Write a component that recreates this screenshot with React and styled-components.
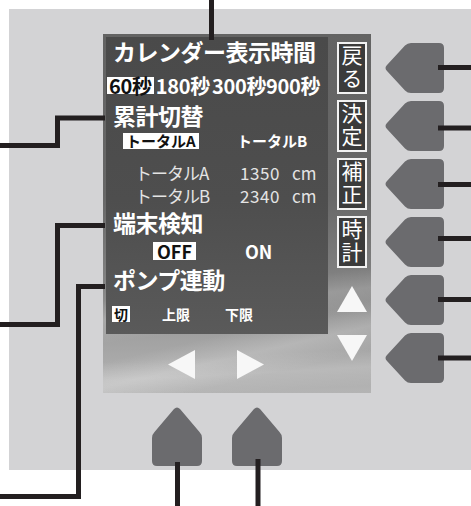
import styled, { createGlobalStyle } from "styled-components";

const JP = `"Noto Sans CJK JP", "Noto Sans", sans-serif`;

const GlobalStyle = createGlobalStyle`
  html, body {
    margin: 0;
    padding: 0;
    background: #fff;
  }
  body {
    font-family: ${JP};
  }
`;

const Figure = styled.div`
  position: relative;
  width: 471px;
  height: 506px;
  padding-top: 9px;
  box-sizing: border-box;
  overflow: hidden;
  background: #fff;
`;

const Panel = styled.div`
  margin-left: 9px;
  height: 461px;
  box-sizing: border-box;
  padding: 25px 0 0 94px;
  background: #d3d3d5;
  display: flex;
  flex-direction: column;
`;

const TopRow = styled.div`
  display: flex;
  align-items: flex-start;
  gap: 13px;
`;

const Screen = styled.div`
  width: 268px;
  height: 359px;
  box-sizing: border-box;
  padding: 3px 0 0 3px;
  display: grid;
  grid-template-columns: 222px 1fr;
  grid-template-rows: 297px 1fr;
  background:
    linear-gradient(173deg, transparent 68%, rgba(255, 255, 255, 0.16) 73%, transparent 79%),
    linear-gradient(167deg, transparent 78%, rgba(255, 255, 255, 0.2) 84%, transparent 90%),
    linear-gradient(177deg, transparent 88%, rgba(255, 255, 255, 0.16) 93%, transparent 98%),
    linear-gradient(to bottom, #636363 0%, #676767 45%, #838383 70%, #a2a2a2 85%, #b4b4b4 100%);
`;

const Content = styled.div`
  background: linear-gradient(to bottom, #4a4a4a 0%, #4e4e4e 55%, #5a5a5a 100%);
  color: #fff;
  display: flex;
  flex-direction: column;
`;

const Heading = styled.div`
  margin: ${(p) => p.$top}px 0 0 7px;
  height: 23px;
  font-size: 23px;
  line-height: 23px;
  font-weight: 700;
  letter-spacing: -0.5px;
  white-space: nowrap;
`;

const Row = styled.div`
  margin: ${(p) => p.$top}px 0 0 ${(p) => p.$indent}px;
  height: ${(p) => p.$h}px;
  display: ${(p) => (p.$cols ? "grid" : "flex")};
  grid-template-columns: ${(p) => p.$cols || "none"};
  align-items: center;
  font-size: ${(p) => p.$size}px;
  line-height: ${(p) => p.$h}px;
  font-weight: 700;
  letter-spacing: ${(p) => p.$track ?? 0}px;
  white-space: nowrap;
`;

const Chip = styled.span`
  justify-self: start;
  height: 100%;
  padding: 0 ${(p) => p.$pad ?? 2}px;
  background: ${(p) => (p.$on ? "#fff" : "transparent")};
  color: ${(p) => (p.$on ? "#111" : "#fff")};
`;

const Values = styled.div`
  margin: 15px 0 0 29px;
  display: grid;
  grid-template-columns: 105px 52px auto;
  row-gap: 6px;
  font-size: 17px;
  line-height: 17px;
  font-weight: 400;
  color: #e4e4e4;
  white-space: nowrap;

  .num {
    letter-spacing: 0.6px;
  }
  .label {
    letter-spacing: -1px;
  }
`;

const Side = styled.div`
  grid-row: 1 / 3;
  grid-column: 2;
  padding: 5px 0 0 9px;
  display: flex;
  flex-direction: column;
  align-items: flex-start;
  gap: 6px;
`;

const SideKey = styled.div`
  width: 30px;
  height: 52px;
  box-sizing: border-box;
  border: 2px solid #f2f2f2;
  background: #3b3b3b;
  color: #fff;
  display: flex;
  align-items: center;
  justify-content: center;
  writing-mode: vertical-rl;
  text-orientation: upright;
  font-size: 21px;
  line-height: 26px;
  letter-spacing: 2px;
  font-weight: 400;
`;

const Tri = styled.svg`
  display: block;
  margin-top: ${(p) => p.$top}px;
`;

const ArrowRow = styled.div`
  padding: 16px 0 0 62px;
  display: flex;
  gap: 42px;
`;

const KeyColumn = styled.div`
  padding-top: 9px;
  display: flex;
  flex-direction: column;
  gap: 8px;
`;

const BottomKeys = styled.div`
  margin: 13px 0 0 49px;
  display: flex;
  gap: 30px;
`;

const Leaders = styled.svg`
  position: absolute;
  left: 0;
  top: 0;
  pointer-events: none;
`;

const KEY = "#6b6b6e";

const LeftKey = () => (
  <svg width="60" height="50" viewBox="0 0 60 50">
    <path
      d="M3 22 L21 2.5 Q23.5 0 27 0 L55 0 Q60 0 60 5 L60 45 Q60 50 55 50 L27 50 Q23.5 50 21 47.5 L3 28 Q0 25 3 22 Z"
      fill={KEY}
    />
  </svg>
);

const UpKey = () => (
  <svg width="50" height="60" viewBox="0 0 50 60">
    <path
      d="M22 3 Q25 0 28 3 L47.5 26 Q50 28.5 50 32 L50 55 Q50 60 45 60 L5 60 Q0 60 0 55 L0 32 Q0 28.5 2.5 26 Z"
      fill={KEY}
    />
  </svg>
);

const sideKeys = ["戻る", "決定", "補正", "時計"];
const rightLines = [67.5, 128, 184.5, 238.5, 299.5, 358];

export default function App() {
  return (
    <Figure>
      <GlobalStyle />
      <Panel>
        <TopRow>
          <Screen>
            <Content>
              <Heading $top={3}>カレンダー表示時間</Heading>
              <Row $top={14} $indent={1} $h={17} $size={20} $track={-0.3}>
                <Chip $on>60秒</Chip>
                <Chip>180秒</Chip>
                <Chip $pad={0}>300秒</Chip>
                <Chip $pad={0}>900秒</Chip>
              </Row>
              <Heading $top={10}>累計切替</Heading>
              <Row $top={6} $indent={17} $h={16} $size={15} $cols="114px auto">
                <Chip $on $pad={3}>トータルA</Chip>
                <Chip $pad={0}>トータルB</Chip>
              </Row>
              <Values>
                <span className="label">トータルA</span>
                <span className="num">1350</span>
                <span>cm</span>
                <span className="label">トータルB</span>
                <span className="num">2340</span>
                <span>cm</span>
              </Values>
              <Heading $top={7}>端末検知</Heading>
              <Row $top={8} $indent={47} $h={18} $size={18} $cols="92px auto">
                <Chip $on $pad={4}>OFF</Chip>
                <Chip $pad={0}>ON</Chip>
              </Row>
              <Heading $top={8}>ポンプ連動</Heading>
              <Row $top={15} $indent={6} $h={16} $size={14} $cols="50px 63px auto">
                <Chip $on $pad={2}>切</Chip>
                <Chip $pad={0}>上限</Chip>
                <Chip $pad={0}>下限</Chip>
              </Row>
            </Content>
            <Side>
              {sideKeys.map((k) => (
                <SideKey key={k}>{k}</SideKey>
              ))}
              <Tri $top={12} width="30" height="26" viewBox="0 0 30 26">
                <polygon points="15,0 30,26 0,26" fill="#f7f7f7" />
              </Tri>
              <Tri $top={17} width="30" height="26" viewBox="0 0 30 26">
                <polygon points="0,0 30,0 15,26" fill="#f7f7f7" />
              </Tri>
            </Side>
            <ArrowRow>
              <svg width="27" height="29" viewBox="0 0 27 29">
                <polygon points="0,14.5 27,0 27,29" fill="#f7f7f7" />
              </svg>
              <svg width="27" height="29" viewBox="0 0 27 29">
                <polygon points="0,0 27,14.5 0,29" fill="#f7f7f7" />
              </svg>
            </ArrowRow>
          </Screen>
          <KeyColumn>
            {rightLines.map((y) => (
              <LeftKey key={y} />
            ))}
          </KeyColumn>
        </TopRow>
        <BottomKeys>
          <UpKey />
          <UpKey />
        </BottomKeys>
      </Panel>
      <Leaders width="471" height="506" viewBox="0 0 471 506">
        <g stroke="#231f20" strokeWidth="5" fill="none">
          <path d="M211.5 0 V40" />
          <path d="M0 145.5 H57.5 V118 H105" />
          <path d="M0 324.5 H57.5 V225.5 H105" />
          <path d="M0 496.5 H78.5 V286.5 H105" />
          {rightLines.map((y) => (
            <path key={y} d={`M438 ${y} H471`} />
          ))}
          <path d="M177.5 462 V506" />
          <path d="M258 459 V506" />
        </g>
      </Leaders>
    </Figure>
  );
}
